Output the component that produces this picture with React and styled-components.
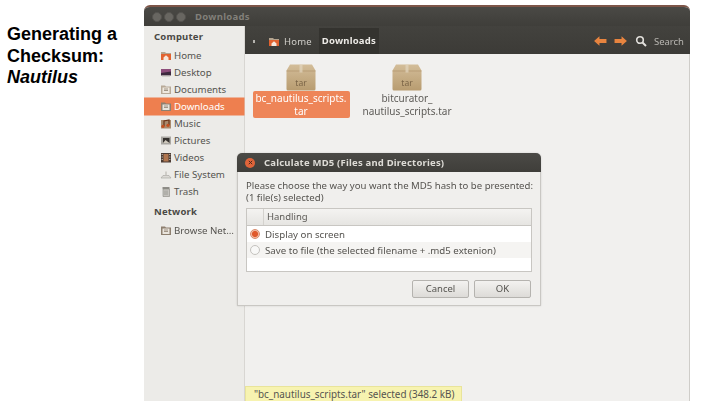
import React from 'react'
import styled, { createGlobalStyle } from 'styled-components'

const GlobalStyle = createGlobalStyle`
  html, body { margin: 0; padding: 0; background: #fff; }
  body { width: 720px; height: 405px; overflow: hidden; }
`

const ubuntu = `"Noto Sans", "Open Sans", sans-serif`

const Page = styled.div`
  display: flex;
  width: 720px;
  height: 405px;
`

const Caption = styled.div`
  width: 137px;
  margin-left: 7px;
  padding-top: 24px;
  font: bold 18px/21.5px "Liberation Sans", Arial, sans-serif;
  color: #000;
  em { font-style: italic; }
`

const Window = styled.div`
  position: relative;
  box-sizing: border-box;
  width: 546px;
  height: 396px;
  margin-top: 5px;
  display: flex;
  flex-direction: column;
  font-family: ${ubuntu};
  filter: blur(0.45px);
  border-top: 2px solid #7d5548;
  border-radius: 6px 6px 0 0;
  overflow: hidden;
  background: #f1f0ee;
`

const TitleBar = styled.div`
  height: 19px;
  flex: none;
  display: flex;
  align-items: center;
  gap: 2px;
  padding-left: 8px;
  background: linear-gradient(#4a4945, #3f3e3a);
`

const WinDot = styled.span`
  width: 10px;
  height: 10px;
  border-radius: 50%;
  background: #686661;
  border: 1px solid #55534f;
  box-sizing: border-box;
`

const WinTitle = styled.span`
  margin-left: 7px;
  font-size: 9.5px;
  font-weight: 700;
  letter-spacing: 0.3px;
  color: #817f79;
`

const Body = styled.div`
  flex: 1;
  display: flex;
  min-height: 0;
`

const Sidebar = styled.div`
  width: 101px;
  flex: none;
  background: #ecebe8;
  border-right: 1px solid #d8d6d2;
  box-sizing: border-box;
  padding-top: 1px;
`

const SideHead = styled.div`
  height: 20px;
  line-height: 20px;
  padding-left: 10px;
  font-size: 9.5px;
  font-weight: 700;
  letter-spacing: 0.2px;
  color: #4a4945;
  margin-top: ${({ $gap }) => $gap || 0}px;
`

const SideRow = styled.div`
  display: flex;
  align-items: center;
  height: 17px;
  gap: 2px;
  padding-left: 16px;
  font-size: 9.7px;
  white-space: nowrap;
  color: ${({ $active }) => ($active ? '#fff' : '#55534f')};
  background: ${({ $active }) => ($active ? '#ee7f4f' : 'transparent')};
  box-shadow: ${({ $active }) => ($active ? '0 0 0 0.5px #ee7f4f' : 'none')};
`

const Main = styled.div`
  flex: 1;
  display: flex;
  flex-direction: column;
  min-width: 0;
`

const Toolbar = styled.div`
  box-sizing: border-box;
  height: 28px;
  flex: none;
  display: flex;
  align-items: center;
  background: linear-gradient(#43423e, #3c3b37);
  padding: 2px 0 0 8px;
  color: #dedcd8;
  font-size: 9.5px;
`

const Chevron = styled.span`
  width: 2px;
  height: 3px;
  background: #b5b3ae;
  margin-right: 13px;
`

const Crumb = styled.span`
  display: flex;
  align-items: center;
  gap: 4px;
  color: #cfcdc8;
  letter-spacing: 0.2px;
`

const CrumbActive = styled.span`
  margin-left: 7px;
  height: 26px;
  line-height: 26px;
  padding: 0 3px;
  background: #34332f;
  color: #eceae6;
  font-weight: 700;
  letter-spacing: 0.2px;
`

const ToolRight = styled.div`
  margin-left: auto;
  display: flex;
  align-items: center;
  gap: 7px;
  padding-right: 6px;
  color: #b9b7b2;
`

const Files = styled.div`
  flex: 1;
  display: flex;
  align-items: flex-start;
  padding-top: 10px;
  padding-left: 6px;
  gap: 6px;
  background: #f1f0ee;
  border-right: 1px solid #cfcdc9;
`

const FileItem = styled.div`
  width: 100px;
  display: flex;
  flex-direction: column;
  align-items: center;
`

const FileName = styled.div`
  padding: 1px 0 1px;
  width: ${({ $selected }) => ($selected ? '97px' : 'auto')};
  text-align: center;
  font-size: 10px;
  line-height: 12.5px;
  border-radius: 2px;
  white-space: nowrap;
  color: ${({ $selected }) => ($selected ? '#fff' : '#5e5c58')};
  background: ${({ $selected }) => ($selected ? '#ee8558' : 'transparent')};
`

const Dialog = styled.div`
  position: absolute;
  left: 93px;
  top: 146px;
  width: 304px;
  height: 153px;
  background: #f0efed;
  border: 1px solid #c9c7c3;
  border-top: none;
  border-radius: 5px 5px 0 0;
  box-sizing: border-box;
  box-shadow: 0 0 2px rgba(0, 0, 0, 0.15);
`

const DialogTitle = styled.div`
  height: 19px;
  margin: 0 -1px;
  display: flex;
  align-items: center;
  padding-left: 8px;
  gap: 9px;
  border-radius: 5px 5px 0 0;
  background: linear-gradient(#4b4a46, #3f3e3a);
  color: #dddbd6;
  font-size: 9.5px;
  font-weight: 700;
  letter-spacing: 0.2px;
`

const CloseDot = styled.span`
  display: flex;
  align-items: center;
  justify-content: center;
  width: 10px;
  height: 10px;
  border-radius: 50%;
  background: #e0643a;
`

const Prompt = styled.div`
  padding: 8px 8px 0;
  font-size: 9.6px;
  line-height: 12px;
  color: #55534f;
  white-space: nowrap;
`

const ListBox = styled.div`
  margin: 4px 8px 0;
  height: 64px;
  border: 1px solid #c8c6c2;
  background: #fff;
  box-sizing: border-box;
`

const ListHead = styled.div`
  height: 16px;
  display: flex;
  background: linear-gradient(#f4f3f1, #e6e5e2);
  border-bottom: 1px solid #c8c6c2;
  font-size: 9.5px;
  line-height: 16px;
  color: #5c5a56;
`

const HeadCell = styled.div`
  width: ${({ $w }) => ($w ? `${$w}px` : 'auto')};
  padding-left: ${({ $w }) => ($w ? 0 : 3)}px;
  border-right: ${({ $w }) => ($w ? '1px solid #d4d2ce' : 'none')};
`

const OptionRow = styled.div`
  height: 16px;
  display: flex;
  align-items: center;
  gap: 5px;
  padding-left: 3px;
  font-size: 9.7px;
  color: #55534f;
  white-space: nowrap;
  background: ${({ $alt }) => ($alt ? '#f5f4f2' : '#fff')};
`

const Radio = styled.span`
  width: 10px;
  height: 10px;
  flex: none;
  box-sizing: border-box;
  border-radius: 50%;
  border: 1px solid ${({ $on }) => ($on ? '#d98a6a' : '#c4c2be')};
  background: ${({ $on }) => ($on ? 'radial-gradient(circle, #e0592b 0 2.6px, #f0c0aa 3.6px)' : '#f8f8f7')};
`

const Actions = styled.div`
  display: flex;
  justify-content: flex-end;
  gap: 5px;
  padding: 8px 9px 0 0;
`

const Button = styled.div`
  width: 55px;
  height: 16px;
  line-height: 16px;
  text-align: center;
  font-size: 9.5px;
  color: #55534f;
  border: 1px solid #b5b3af;
  border-radius: 2px;
  background: linear-gradient(#f3f2f0, #dddbd8);
`

const Status = styled.div`
  position: absolute;
  left: 101px;
  bottom: 0;
  height: 14px;
  line-height: 14px;
  padding: 0 6px 0 8px;
  font-size: 9.9px;
  color: #55534f;
  white-space: nowrap;
  background: #f7f3b0;
  border: 1px solid #e9e49a;
  border-bottom: none;
`

const HomeIcon = () => (
  <svg width="12" height="11" viewBox="0 0 12 11">
    <path d="M1 2h4l1 1h5v7H1z" fill="#b4a38e" />
    <path d="M1 4h10v6H1z" fill="#e2622f" />
    <path d="M3.500 7.500 6 5.200l2.500 2.300V10h-5z" fill="#f6e7dc" />
  </svg>
)

const DesktopIcon = () => (
  <svg width="12" height="11" viewBox="0 0 12 11">
    <path d="M1 2h10v6.500H1z" fill="#3d2a3f" />
    <path d="M1 2h10v2.500L1 6z" fill="#8d4e7c" />
    <path d="M2 8.500h8v1H2z" fill="#b7b5b0" />
  </svg>
)

const FolderIcon = ({ mark }) => (
  <svg width="12" height="11" viewBox="0 0 12 11">
    <path d="M1 1.500h4l1 1h5V10H1z" fill={mark === 'dark' ? '#8d7f6f' : '#b8aa98'} />
    <path d="M2.500 3.500h7V9h-7z" fill={mark === 'dark' ? '#e9e4dc' : '#efe9e0'} />
    <path d="M4 5h4M4 6.500h4" stroke="#8d7f6f" strokeWidth="0.8" />
  </svg>
)

const MusicIcon = () => (
  <svg width="12" height="11" viewBox="0 0 12 11">
    <path d="M1 2h10v8.500H1z" fill="#a98a6c" />
    <path d="M4 8V3l5-1v5" stroke="#6b3418" strokeWidth="1.200" fill="none" />
    <circle cx="3" cy="8.300" r="1.600" fill="#c4501f" />
    <circle cx="8" cy="7.300" r="1.600" fill="#c4501f" />
  </svg>
)

const PicturesIcon = () => (
  <svg width="12" height="11" viewBox="0 0 12 11">
    <path d="M1 1.500h10v8H1z" fill="#a9a7a2" />
    <path d="M3 3h6.500v5H3z" fill="#35322f" />
    <path d="M3 8l2.500-3L9.500 8z" fill="#cfc9bd" />
  </svg>
)

const VideosIcon = () => (
  <svg width="12" height="11" viewBox="0 0 12 11">
    <path d="M1 1h10v9.500H1z" fill="#4c3c34" />
    <path d="M3.500 2h5v7.500h-5z" fill="#b07650" />
    <path d="M1.700 2h1v1h-1zM1.700 4.500h1v1h-1zM1.700 7h1v1h-1zM9.300 2h1v1h-1zM9.300 4.500h1v1h-1zM9.300 7h1v1h-1z" fill="#d7d2c9" />
  </svg>
)

const DriveIcon = () => (
  <svg width="12" height="11" viewBox="0 0 12 11">
    <path d="M3 6.500h6L11 9H1z" fill="#dcdad6" stroke="#a3a19c" strokeWidth="0.600" />
    <path d="M5 2.500h2V6H5z" fill="#cfcdc8" />
  </svg>
)

const TrashIcon = () => (
  <svg width="12" height="11" viewBox="0 0 12 11">
    <path d="M2.500 1h7v2h-7z" fill="#8e8c87" />
    <path d="M3 3h6.500v7.500H3z" fill="#c5c3be" stroke="#888680" strokeWidth="0.600" />
    <path d="M5 4.500v4.500M7 4.500v4.500" stroke="#8e8c87" strokeWidth="0.700" />
  </svg>
)

const TarIcon = ({ id }) => (
  <svg width="30" height="27" viewBox="0 0 30 27">
    <defs>
      <linearGradient id={id} x1="0" y1="0" x2="0" y2="1">
        <stop offset="0" stopColor="#d3bd99" />
        <stop offset="1" stopColor="#b89c70" />
      </linearGradient>
    </defs>
    <path d="M4 0.500h22l3.500 6V25a1.500 1.500 0 0 1-1.500 1.500H2A1.500 1.500 0 0 1 0.500 25V6.500z" fill={`url(#${id})`} />
    <path d="M0.500 6.500h29v1h-29z" fill="#a98d64" opacity="0.55" />
    <path d="M13.500 0.500h3v8h-3z" fill="#e3d6bf" opacity="0.7" />
    <text x="15" y="22" textAnchor="middle" fontSize="8.500" fill="#7b6547" fontFamily="Noto Sans, sans-serif">tar</text>
  </svg>
)

const ArrowIcon = ({ flip }) => (
  <svg width="14" height="12" viewBox="0 0 13 11" style={flip ? { transform: 'scaleX(-1)' } : undefined}>
    <path d="M6 1 1 5.500 6 10V7.300h6.500V3.700H6z" fill="#e8843f" />
  </svg>
)

const SearchIcon = () => (
  <svg width="12" height="12" viewBox="0 0 12 12">
    <circle cx="5" cy="5" r="3.300" fill="none" stroke="#e2e0dc" strokeWidth="1.600" />
    <path d="M7.500 7.500 11 11" stroke="#e2e0dc" strokeWidth="2" />
  </svg>
)

const places = [
  { label: 'Home', icon: <HomeIcon /> },
  { label: 'Desktop', icon: <DesktopIcon /> },
  { label: 'Documents', icon: <FolderIcon /> },
  { label: 'Downloads', icon: <FolderIcon mark="dark" />, active: true },
  { label: 'Music', icon: <MusicIcon /> },
  { label: 'Pictures', icon: <PicturesIcon /> },
  { label: 'Videos', icon: <VideosIcon /> },
  { label: 'File System', icon: <DriveIcon /> },
  { label: 'Trash', icon: <TrashIcon /> },
]

export default function App() {
  return (
    <Page>
      <GlobalStyle />
      <Caption>
        Generating a
        <br />
        Checksum:
        <br />
        <em>Nautilus</em>
      </Caption>
      <Window>
        <TitleBar>
          <WinDot />
          <WinDot />
          <WinDot />
          <WinTitle>Downloads</WinTitle>
        </TitleBar>
        <Body>
          <Sidebar>
            <SideHead>Computer</SideHead>
            {places.map((p) => (
              <SideRow key={p.label} $active={p.active}>
                {p.icon}
                {p.label}
              </SideRow>
            ))}
            <SideHead $gap={2}>Network</SideHead>
            <SideRow>
              <FolderIcon mark="dark" />
              Browse Net…
            </SideRow>
          </Sidebar>
          <Main>
            <Toolbar>
              <Chevron />
              <Crumb>
                <HomeIcon />
                Home
              </Crumb>
              <CrumbActive>Downloads</CrumbActive>
              <ToolRight>
                <ArrowIcon />
                <ArrowIcon flip />
                <SearchIcon />
                <span>Search</span>
              </ToolRight>
            </Toolbar>
            <Files>
              <FileItem>
                <TarIcon id="box-a" />
                <FileName $selected>
                  bc_nautilus_scripts.
                  <br />
                  tar
                </FileName>
              </FileItem>
              <FileItem>
                <TarIcon id="box-b" />
                <FileName>
                  bitcurator_
                  <br />
                  nautilus_scripts.tar
                </FileName>
              </FileItem>
            </Files>
          </Main>
        </Body>
        <Dialog>
          <DialogTitle>
            <CloseDot>
              <svg width="5" height="5" viewBox="0 0 5 5">
                <path d="M0.800 0.800l3.400 3.400M4.200 0.800 0.800 4.200" stroke="#4a2a1c" strokeWidth="1" />
              </svg>
            </CloseDot>
            Calculate MD5 (Files and Directories)
          </DialogTitle>
          <Prompt>
            Please choose the way you want the MD5 hash to be presented:
            <br />
            (1 file(s) selected)
          </Prompt>
          <ListBox>
            <ListHead>
              <HeadCell $w={16} />
              <HeadCell>Handling</HeadCell>
            </ListHead>
            <OptionRow>
              <Radio $on />
              Display on screen
            </OptionRow>
            <OptionRow $alt>
              <Radio />
              Save to file (the selected filename + .md5 extenion)
            </OptionRow>
          </ListBox>
          <Actions>
            <Button>Cancel</Button>
            <Button>OK</Button>
          </Actions>
        </Dialog>
        <Status>"bc_nautilus_scripts.tar" selected (348.2 kB)</Status>
      </Window>
    </Page>
  )
}
